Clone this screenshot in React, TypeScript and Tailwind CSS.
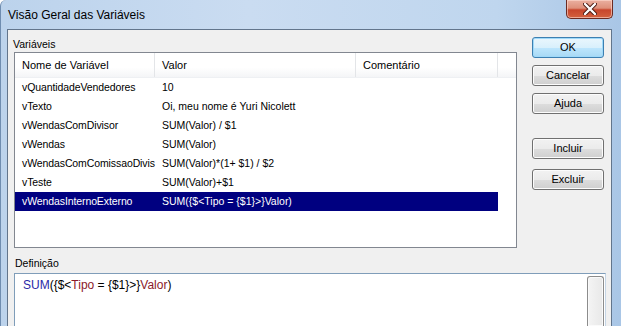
import React from "react";

const rows = [
  ["vQuantidadeVendedores", "10"],
  ["vTexto", "Oi, meu nome é Yuri Nicolett"],
  ["vWendasComDivisor", "SUM(Valor) / $1"],
  ["vWendas", "SUM(Valor)"],
  ["vWendasComComissaoDivis", "SUM(Valor)*(1+ $1) / $2"],
  ["vTeste", "SUM(Valor)+$1"],
  ["vWendasInternoExterno", "SUM({$<Tipo = {$1}>}Valor)"],
];

function Btn({ label, def }: { label: string; def?: boolean }) {
  return (
    <div
      className={
        "w-[72px] h-[21px] rounded-[3px] border flex items-center justify-center text-[11px] leading-none text-black " +
        (def
          ? "border-[#3c7fb1] bg-[linear-gradient(to_bottom,#eaf6fd_0%,#d9f0fc_50%,#bee6fd_51%,#a7d9f5_100%)] shadow-[inset_0_0_0_1px_#9fd9f9]"
          : "border-[#707070] bg-[linear-gradient(to_bottom,#f2f2f2_0%,#ebebeb_50%,#dddddd_51%,#cfcfcf_100%)] shadow-[inset_0_0_0_1px_#fcfcfc]")
      }
    >
      {label}
    </div>
  );
}

export default function App() {
  return (
    <div
      className="w-[621px] h-[326px] overflow-hidden flex flex-col bg-[linear-gradient(to_right,#bcd3ec,#cadcf1_40%,#bfd6ee_80%,#a9c6e6)] border-l border-[#6f8db0] rounded-tl-[6px]"
      style={{ fontFamily: '"Liberation Sans", Arial, sans-serif' }}
    >
      {/* Title bar */}
      <div className="h-[29px] flex items-start pl-[7px] pr-[8px] shrink-0">
        <div className="pt-[8px] text-[12px] leading-[14px] text-black">Visão Geral das Variáveis</div>
        <div className="ml-auto w-[47px] h-[19px] rounded-b-[5px] border border-t-0 border-[#6b2b22] bg-[linear-gradient(to_bottom,#eab0a0_0%,#de907a_45%,#c8462c_55%,#d3613f_100%)] shadow-[inset_0_0_0_1px_rgba(255,220,210,0.6)] flex items-center justify-center">
          <svg width="14" height="12" viewBox="0 0 14 12">
            <path d="M2 1 L12 11 M12 1 L2 11" stroke="#4a1a12" strokeWidth="4.2" strokeLinecap="round" />
            <path d="M2 1 L12 11 M12 1 L2 11" stroke="#ffffff" strokeWidth="2.4" strokeLinecap="round" />
          </svg>
        </div>
      </div>

      {/* Client */}
      <div className="flex-1 flex pl-[6px] pr-[9px]">
        <div className="flex-1 border border-b-0 border-[#62758c] bg-[#f0f0f0] flex flex-col text-[11px] text-black">
          <div className="flex">
            <div className="flex flex-col">
              <div className="h-[22px] pt-[7px] pl-[5px] leading-[14px] text-[10.5px]">Variáveis</div>
              <div className="ml-[6px] w-[503px] h-[196px] border border-[#828790] bg-white flex flex-col">
                <div className="h-[25px] flex shrink-0 bg-[linear-gradient(to_bottom,#ffffff_0%,#ffffff_60%,#f4f5f7_100%)] border-b border-[#eef0f3]">
                  <div className="w-[140px] pl-[7px] flex items-center border-r border-[#e3e5e8]">Nome de Variável</div>
                  <div className="w-[201px] pl-[7px] flex items-center border-r border-[#e3e5e8]">Valor</div>
                  <div className="w-[142px] pl-[7px] flex items-center border-r border-[#e3e5e8]">Comentário</div>
                  <div className="flex-1" />
                </div>
                {rows.map((r, i) => {
                  const sel = i === rows.length - 1;
                  return (
                    <div
                      key={i}
                      className={
                        "h-[19px] w-[483px] flex items-center text-[10.5px] " + (sel ? "bg-[#000080] text-white" : "text-black")
                      }
                    >
                      <div className="w-[140px] pl-[7px] whitespace-nowrap tracking-[-0.1px]">{r[0]}</div>
                      <div className="w-[201px] pl-[7px] whitespace-nowrap">{r[1]}</div>
                      <div className="w-[142px]" />
                    </div>
                  );
                })}
              </div>
            </div>
            <div className="ml-[15px] pt-[7px] flex flex-col">
              <Btn label="OK" def />
              <div className="h-[7px]" />
              <Btn label="Cancelar" />
              <div className="h-[7px]" />
              <Btn label="Ajuda" />
              <div className="h-[24px]" />
              <Btn label="Incluir" />
              <div className="h-[10px]" />
              <Btn label="Excluir" />
            </div>
          </div>
          <div className="h-[25px] pt-[8px] pl-[7px] leading-[14px] text-[10.5px]">Definição</div>
          <div className="ml-[6px] w-[592px] flex-1 border border-b-0 border-[#7f9db9] border-r-[#c5d5e5] bg-white flex">
            <div className="flex-1 pl-[8px] pt-[4px] text-[12px] leading-[15px] whitespace-nowrap">
              <span className="text-[#2a2aa8]">SUM</span>
              <span className="text-black">{"({$<"}</span>
              <span className="text-[#8b1a2a]">Tipo</span>
              <span className="text-black">{" = {$1}>}"}</span>
              <span className="text-[#8b1a2a]">Valor</span>
              <span className="text-black">)</span>
            </div>
            <div className="w-[17px] mr-[1px] mt-[2px] flex flex-col">
              <div className="flex-1 rounded-t-[3px] border border-b-0 border-[#8c8c8c] bg-[linear-gradient(to_right,#f4f4f4,#e8e8e8)] shadow-[inset_0_0_0_1px_#fafafa]" />
            </div>
          </div>
        </div>
      </div>
    </div>
  );
}
